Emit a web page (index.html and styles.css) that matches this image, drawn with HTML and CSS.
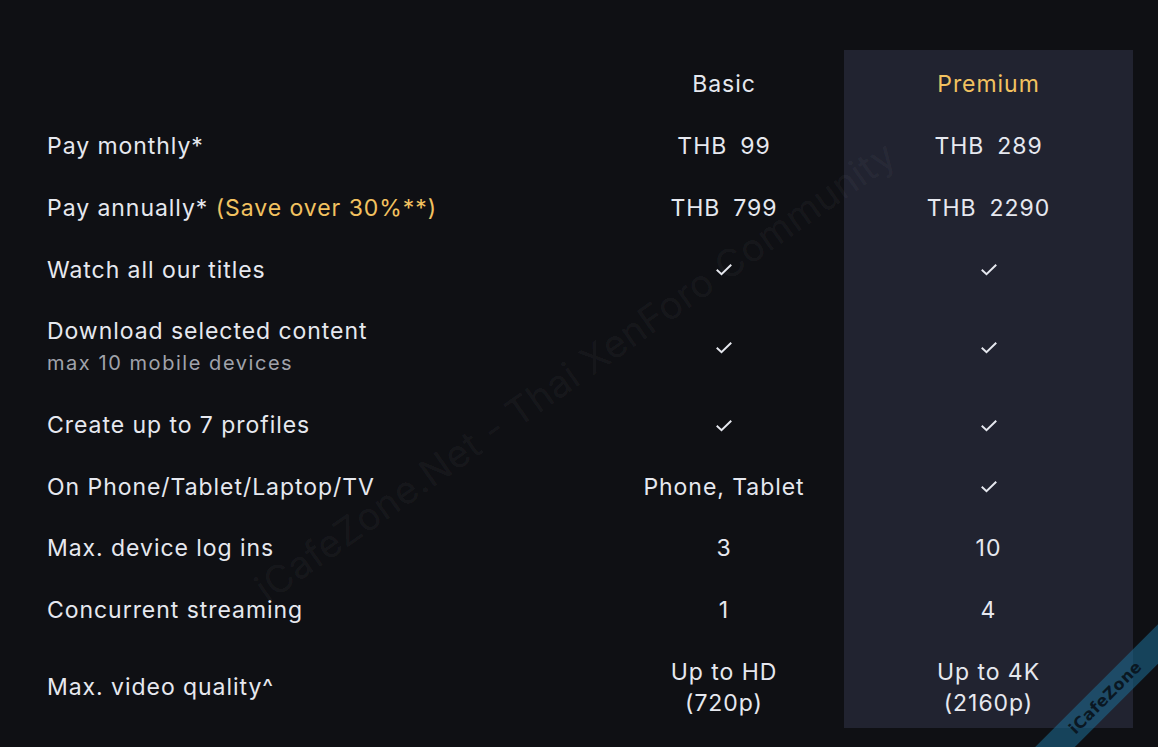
FILE: index.html
```html
<!DOCTYPE html>
<html lang="en">
<head>
<meta charset="utf-8">
<title>Plans</title>
<link rel="stylesheet" href="styles.css">
</head>
<body>
<div class="page">
  <div class="table">
    <div class="cell label head"></div>
    <div class="cell basic head"><div>Basic</div></div>
    <div class="cell premium head"><div class="gold">Premium</div></div>

    <div class="cell label"><div>Pay monthly*</div></div>
    <div class="cell basic"><div>THB<span class="sp"></span>99</div></div>
    <div class="cell premium"><div>THB<span class="sp"></span>289</div></div>

    <div class="cell label"><div>Pay annually* <span class="gold">(Save over 30%**)</span></div></div>
    <div class="cell basic"><div>THB<span class="sp"></span>799</div></div>
    <div class="cell premium"><div>THB<span class="sp"></span>2290</div></div>

    <div class="cell label"><div>Watch all our titles</div></div>
    <div class="cell basic"><svg class="check" viewBox="0 0 16 12"><polyline points="1.5,6.5 5.5,10.2 14.5,1.5"/></svg></div>
    <div class="cell premium"><svg class="check" viewBox="0 0 16 12"><polyline points="1.5,6.5 5.5,10.2 14.5,1.5"/></svg></div>

    <div class="cell label"><div>Download selected content</div><div class="sub">max 10 mobile devices</div></div>
    <div class="cell basic"><svg class="check" viewBox="0 0 16 12"><polyline points="1.5,6.5 5.5,10.2 14.5,1.5"/></svg></div>
    <div class="cell premium"><svg class="check" viewBox="0 0 16 12"><polyline points="1.5,6.5 5.5,10.2 14.5,1.5"/></svg></div>

    <div class="cell label"><div>Create up to 7 profiles</div></div>
    <div class="cell basic"><svg class="check" viewBox="0 0 16 12"><polyline points="1.5,6.5 5.5,10.2 14.5,1.5"/></svg></div>
    <div class="cell premium"><svg class="check" viewBox="0 0 16 12"><polyline points="1.5,6.5 5.5,10.2 14.5,1.5"/></svg></div>

    <div class="cell label"><div>On Phone/Tablet/Laptop/TV</div></div>
    <div class="cell basic"><div>Phone, Tablet</div></div>
    <div class="cell premium"><svg class="check" viewBox="0 0 16 12"><polyline points="1.5,6.5 5.5,10.2 14.5,1.5"/></svg></div>

    <div class="cell label"><div>Max. device log ins</div></div>
    <div class="cell basic"><div>3</div></div>
    <div class="cell premium"><div>10</div></div>

    <div class="cell label"><div>Concurrent streaming</div></div>
    <div class="cell basic"><div>1</div></div>
    <div class="cell premium"><div>4</div></div>

    <div class="cell label last"><div>Max. video quality^</div></div>
    <div class="cell basic last"><div>Up to HD</div><div>(720p)</div></div>
    <div class="cell premium last"><div>Up to 4K</div><div>(2160p)</div></div>
  </div>
  <div class="watermark">iCafeZone.Net - Thai XenForo Community</div>
  <div class="ribbon"><span>iCafeZone</span></div>
</div>
</body>
</html>
```
FILE: styles.css
```css
html, body {
  margin: 0;
  padding: 0;
  background: #0f1014;
}
body {
  font-family: Inter, "Noto Sans", sans-serif;
  color: #e6e8ef;
  width: 1158px;
  height: 747px;
  overflow: hidden;
}
.page {
  position: relative;
  width: 1158px;
  height: 747px;
  padding: 50px 25px 0 25px;
  box-sizing: border-box;
  overflow: hidden;
}
.table {
  display: grid;
  grid-template-columns: 1fr 240px 289px;
  font-size: 23px;
  line-height: 31px;
  letter-spacing: 0.95px;
}
.cell {
  padding: 15.35px 0;
  display: flex;
  flex-direction: column;
  justify-content: center;
  align-items: center;
  text-align: center;
  white-space: nowrap;
}
.cell.label {
  align-items: flex-start;
  text-align: left;
  padding-left: 22px;
}
.cell.head {
  padding-top: 19px;
  padding-bottom: 16px;
}
.cell.last {
  padding-bottom: 9px;
}
.premium {
  background: #212330;
}
.gold {
  color: #f2c260;
}
.sp {
  display: inline-block;
  width: 13px;
}
.sub {
  margin-top: 1px;
  font-size: 20px;
  letter-spacing: 1.55px;
  color: #a0a3ab;
}
.check {
  width: 16px;
  height: 12px;
  fill: none;
  stroke: #e6e8ef;
  stroke-width: 2;
  stroke-linecap: square;
}
.watermark {
  position: absolute;
  left: 155px;
  top: 348px;
  width: 840px;
  text-align: center;
  font-size: 38px;
  letter-spacing: 0.5px;
  color: rgba(255, 255, 255, 0.05);
  transform: rotate(-35deg);
  transform-origin: center;
  white-space: nowrap;
  pointer-events: none;
}
.ribbon {
  position: absolute;
  left: 955px;
  top: 683px;
  width: 300px;
  height: 28px;
  background: rgba(30, 110, 150, 0.55);
  transform: rotate(-45deg);
  display: flex;
  align-items: center;
  justify-content: center;
}
.ribbon span {
  font-family: "DejaVu Sans", sans-serif;
  font-weight: bold;
  font-size: 16px;
  color: #0a1722;
  letter-spacing: 0.5px;
}
```
